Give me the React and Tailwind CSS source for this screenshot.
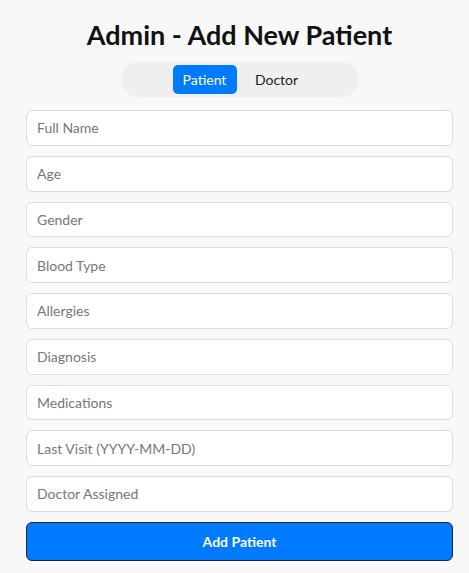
const fields = [
  "Full Name",
  "Age",
  "Gender",
  "Blood Type",
  "Allergies",
  "Diagnosis",
  "Medications",
  "Last Visit (YYYY-MM-DD)",
  "Doctor Assigned",
];

export default function App() {
  return (
    <div className="min-h-screen bg-[#f8f8f8] font-['Lato',sans-serif] text-[#111]">
      <div className="pl-[26px] pr-[16px] pt-[17px]">
        <h1 className="text-center text-[27px] font-bold leading-[35px]">
          Admin - Add New Patient
        </h1>
        <div className="mt-[10px] flex justify-center">
          <div className="flex h-[35px] w-[238px] items-center justify-center gap-[10px] rounded-full bg-[#efefef]">
            <button className="h-[29px] w-[64px] rounded-[5px] bg-[#007bff] text-[14px] text-white">
              Patient
            </button>
            <button className="h-[29px] w-[60px] rounded-[5px] text-[14px] text-[#222]">
              Doctor
            </button>
          </div>
        </div>
        <form className="mt-[13px] flex flex-col gap-[10px]">
          {fields.map((f) => (
            <input
              key={f}
              placeholder={f}
              className="h-[35.75px] w-full rounded-[6px] border border-[#dddddd] bg-white px-[10px] text-[14px] placeholder:text-[#777] outline-none"
            />
          ))}
          <button
            type="button"
            className="h-[39px] w-full rounded-[6px] border border-[#1b2533] bg-[#007bff] text-[14px] font-bold text-white"
          >
            Add Patient
          </button>
        </form>
      </div>
    </div>
  );
}
